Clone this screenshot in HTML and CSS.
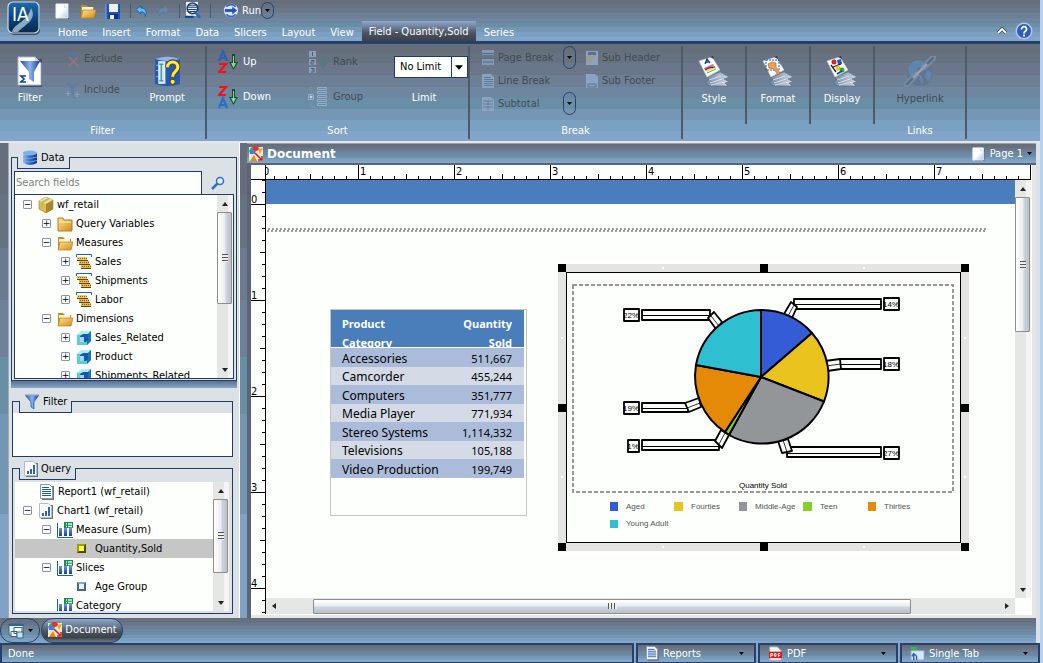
FILE: index.html
```html
<!DOCTYPE html>
<html lang="en">
<head>
<meta charset="utf-8">
<title>Document</title>
<link rel="stylesheet" href="styles.css">
</head>
<body>
<svg class="sprite" aria-hidden="true">
  <defs>
    <linearGradient id="g-page" x1="0" y1="0" x2="1" y2="1"><stop offset=".5" stop-color="#fff"/><stop offset="1" stop-color="#a8c4e4"/></linearGradient>
    <linearGradient id="g-fold" x1="0" y1="0" x2="1" y2="1"><stop offset="0" stop-color="#ffe58a"/><stop offset="1" stop-color="#d08a1c"/></linearGradient>
    <linearGradient id="g-blue" x1="0" x2="1"><stop offset="0" stop-color="#9cc8f4"/><stop offset=".4" stop-color="#3f78d0"/><stop offset="1" stop-color="#0c2f86"/></linearGradient>
    <linearGradient id="g-fun" x1="0" x2="1"><stop offset="0" stop-color="#1c4ca8"/><stop offset=".5" stop-color="#8cb4ec"/><stop offset="1" stop-color="#123c94"/></linearGradient>
    <linearGradient id="g-logo" x1="0" y1="0" x2="0" y2="1"><stop offset="0" stop-color="#1b6cae"/><stop offset=".55" stop-color="#0a4278"/><stop offset="1" stop-color="#08294c"/></linearGradient>
    <linearGradient id="g-bar" x1="0" y1="0" x2="0" y2="1"><stop offset="0" stop-color="#7fb0ea"/><stop offset="1" stop-color="#1a3f8c"/></linearGradient>
    <linearGradient id="g-paper" x1="0" y1="0" x2="1" y2="0"><stop offset="0" stop-color="#6f819c"/><stop offset="1" stop-color="#cfdbea"/></linearGradient>
  </defs>
  <symbol id="i-page" viewBox="0 0 16 16"><path d="M3 2h11v14H3z" fill="#46536a"/><path d="M1 1h12v14H1z" fill="url(#g-page)" stroke="#eef3f8"/><path d="M9 1v4h4z" fill="#dbe6f2"/></symbol>
  <symbol id="i-open" viewBox="0 0 16 16"><path d="M1 2h5l2 2h6v11H1z" fill="#c98b26"/><path d="M2 4h11v3H2z" fill="#fff6cf"/><path d="M3 7h13l-2 8H1z" fill="url(#g-fold)" stroke="#c17c14" stroke-width=".7"/></symbol>
  <symbol id="i-folder" viewBox="0 0 16 16"><path d="M1 2h5l1 2h8v11H1z" fill="url(#g-fold)" stroke="#b97d18"/><path d="M2 6h12" stroke="#fff0b0"/></symbol>
  <symbol id="i-save" viewBox="0 0 16 16"><path d="M1 1h14v15H2l-1-2z" fill="#1b53b8"/><path d="M4 1h9v8H4z" fill="#eaf2fc"/><path d="M4 11h9v5H4z" fill="#11307c"/><path d="M5 12h4v4H5z" fill="#e8f0fa"/><path d="M1 1v14" stroke="#6ea4ee"/></symbol>
  <symbol id="i-undo" viewBox="0 0 16 16"><path d="M1 6l6-5v3c6 0 9 4 6 11 0-4-2-6-6-6v3z" fill="#5cbcf4" stroke="#0e5aa4"/></symbol>
  <symbol id="i-redo" viewBox="0 0 16 16"><path d="M15 6L9 1v3C3 4 0 8 3 15c0-4 2-6 6-6v3z" fill="#6488ac" stroke="#587b9e"/></symbol>
  <symbol id="i-find" viewBox="0 0 16 16"><path d="M2 0h11v13H2z" fill="#fff"/><circle cx="8" cy="6" r="5" fill="#e9f3ff" stroke="#153a80" stroke-width="1.500"/><path d="M4 3h8M4 5h8M4 7h8M5 9h6" stroke="#153a80"/><path d="M11 10l4 5" stroke="#2d68bd" stroke-width="2.500"/><path d="M1 14h8" stroke="#174382" stroke-width="2"/></symbol>
  <symbol id="i-run" viewBox="0 0 16 16"><circle cx="8" cy="8" r="7.500" fill="#dfeafa"/><path d="M3 4a6.500 6.500 0 0 1 10 0M3 12a6.500 6.500 0 0 0 10 0" fill="none" stroke="#3668c2" stroke-width="2"/><path d="M1 6h8V3l6 5-6 5v-3H1z" fill="#2153bb" stroke="#fff" stroke-width=".7"/></symbol>
  <symbol id="i-funnel" viewBox="0 0 16 16"><path d="M1 1h14L10 8v7l-3-2V8z" fill="url(#g-fun)" stroke="#27509e" stroke-width=".7"/><path d="M1 1h14" stroke="#a8c8f0"/></symbol>
  <symbol id="i-filterpage" viewBox="0 0 26 31"><path d="M3 3h22v28H3z" fill="#3d5168"/><path d="M1 1h17l6 6v22H1z" fill="#fff" stroke="#a8bad0"/><path d="M18 1v6h6z" fill="#c4d2e4"/><path d="M3 5h20l-6 11v10l-5-3v-7z" fill="url(#g-fun)"/><path d="M9 20H4l3 3-3 3h5" fill="none" stroke="#10439a" stroke-width="1.700"/></symbol>
  <symbol id="i-exclude" viewBox="0 0 16 16"><path d="M0 1h15L10 7v7l-3-2V7z" fill="#5b7496"/><path d="M4 6l9 9M13 6l-9 9" stroke="#a07078" stroke-width="1.500"/></symbol>
  <symbol id="i-include" viewBox="0 0 16 16"><path d="M1 1h13L9 7v7l-3-2V7z" fill="#5f7f9f"/><path d="M3 9v5M.5 11.500h5M12 10v5M9.500 12.500h5" stroke="#86a2bc" stroke-width="1.200"/></symbol>
  <symbol id="i-prompt" viewBox="0 0 26 30"><path d="M1 3q12-5 24 0v24q-12 4-24 0z" fill="#2359b6"/><path d="M1 3q12-5 24 0-12 4-24 0z" fill="#8fb4ea"/><path d="M2 9h7M2 14h8M2 20h8" stroke="#8cb4e8"/><path d="M4 5h7v22H4z" fill="#ddebf0"/><path d="M7 8v16M5 8h4M5 24h4" stroke="#4898a0" stroke-width="1.500"/><path d="M13 11c0-7 10-7 10 0 0 4-5 4-5 9" fill="none" stroke="#574b10" stroke-width="5"/><path d="M13 11c0-7 10-7 10 0 0 4-5 4-5 9" fill="none" stroke="#ffe84a" stroke-width="3"/><circle cx="18" cy="25" r="2.500" fill="#ffe84a" stroke="#574b10"/></symbol>
  <symbol id="i-arrow" viewBox="0 0 9 16"><path d="M3 0h3v8h3l-4.500 8L0 8h3z" fill="#174d2c"/><path d="M4 2h1v7h2l-2.500 5L2 9h2z" fill="#8ed4a0"/></symbol>
  <symbol id="i-up" viewBox="0 0 21 24"><path d="M1 11L5 1l4 10M2.500 8h5" fill="none" stroke="#2e5fb4" stroke-width="2.200"/><path d="M1 14h7L1 22h7" fill="none" stroke="#f01414" stroke-width="2.200"/><use href="#i-arrow" x="11" y="4" width="9" height="16"/></symbol>
  <symbol id="i-down" viewBox="0 0 21 24"><path d="M1 2h7L1 10h7" fill="none" stroke="#f01414" stroke-width="2.200"/><path d="M1 23L5 13l4 10M2.500 20h5" fill="none" stroke="#2e6cc9" stroke-width="2.200"/><use href="#i-arrow" x="11" y="4" width="9" height="16"/></symbol>
  <symbol id="i-rank" viewBox="0 0 21 24"><path d="M1 1h7v6H1zM1 9h7v6H1zM1 17h7v6H1z" fill="#8ba1ba"/><path d="M4.500 2v4M3 10.500h3v1.500H3v2h3M3 18.500h3v3.500H3M4 20h2" stroke="#4a5f78" fill="none"/><path d="M15 7v8M12 13l3 4 3-4" stroke="#527a80" stroke-width="2" fill="none"/></symbol>
  <symbol id="i-group" viewBox="0 0 21 24"><g fill="#6e8ba8" stroke="#95aec8"><path d="M9.500 2.500h9v2h-9zM9.500 6.500h9v2h-9zM9.500 10.500h9v2h-9zM9.500 14.500h9v2h-9zM9.500 18.500h9v2h-9z"/><path d="M.5 9.500h5v5h-5z"/></g><path d="M3 10.500v3M1.500 12h3" stroke="#dde7f0"/><path d="M3 2v5M3 17v5h4" fill="none" stroke="#7d9cba" stroke-dasharray="1 1"/></symbol>
  <symbol id="i-pbreak" viewBox="0 0 14 16"><path d="M1 0h12v5H1zM1 9h12v6H1z" fill="#8299b6"/><path d="M1 3.500h12M2 12h10" stroke="#536d8d"/></symbol>
  <symbol id="i-lines" viewBox="0 0 14 16"><path d="M1 1h9l3 3v11H1z" fill="#8ba3be"/><path d="M3 4.500h7M3 6.500h9M3 8.500h9M3 10.500h9M3 12.500h9" stroke="#5f7b9c"/></symbol>
  <symbol id="i-subt" viewBox="0 0 14 16"><path d="M1 1h9l3 3v11H1z" fill="#8ba3be"/><path d="M2 5h10M2 8h10M2 11h10M7 4v10" stroke="#647f9e"/></symbol>
  <symbol id="i-subh" viewBox="0 0 14 16"><path d="M1 1h12v14H1z" fill="#8ba3be"/><path d="M3 2h8v3H3z" fill="#56708e"/><path d="M2 6h9l-6 7-3-2z" fill="#a09994"/></symbol>
  <symbol id="i-subf" viewBox="0 0 14 16"><path d="M1 1h9l3 3v11H1z" fill="#8ba3c2"/><path d="M3 11h8v3H3z" fill="#8ba3c2" stroke="#56708e"/></symbol>
  <symbol id="i-sheets" viewBox="0 0 32 32"><path d="M9 21l13-5 9 5-5 2 5 3-4 1 3 3H11l-4-4 4-2z" fill="url(#g-paper)" stroke="#55677f" stroke-width=".5"/><path d="M11 24l12-4M12 27l12-4M13 29l14-3" stroke="#e6edf6" stroke-width=".8"/><path d="M1 5L14 1l8 13-13 7z" fill="#fff" stroke="#c4cfde" stroke-width=".6"/><path d="M12 1l3-1 1 3z" fill="#2a3950"/></symbol>
  <symbol id="i-style" viewBox="0 0 32 32"><use href="#i-sheets"/><path d="M7 8l2-5 3 4M8 6.500l3-1" fill="none" stroke="#1f3f9c" stroke-width="1.400"/><path d="M6 12l9-4 1 2-9 4z" fill="#d75cae"/><path d="M8 14l9-4 1 2-9 4z" fill="#f4de3c"/><path d="M7 14l4-2 6-1" fill="none" stroke="#222"/><path d="M9 17l9-4" stroke="#58b858"/></symbol>
  <symbol id="i-format" viewBox="0 0 32 32"><use href="#i-sheets"/><path d="M4 4h13v10H4z" fill="none" stroke="#1b5d9e" stroke-dasharray="2 1"/><path d="M6 8l4-2 4 1 0 4 4 6-2 2-4-6-5-1z" fill="#f0a050" stroke="#a4561c" stroke-width=".6"/></symbol>
  <symbol id="i-display" viewBox="0 0 32 32"><use href="#i-sheets"/><circle cx="8" cy="6" r="2.500" fill="#e02020"/><path d="M11 4l4-1 1 5-4 1z" fill="#1a56d0"/><path d="M5 9l5 7M7 11l8-3" stroke="#222" stroke-width="1.300"/><path d="M9 11l4-2 2 4-4 2z" fill="#f0c818"/><circle cx="16" cy="14" r="2.500" fill="#28b030"/><path d="M11 18l5-3" stroke="#1646a4" stroke-width="2"/></symbol>
  <symbol id="i-link" viewBox="0 0 32 32"><circle cx="16" cy="17" r="13" fill="#607690"/><path d="M4 13q3-9 12-9l4 2-3 4-4 2 1 4-5 4-3-1zM15 19l3 1 1 8-3-3zM23 14l5 3-3 9-4-5z" fill="#5f87ae"/><path d="M3 28L12 19M20 11l9-9" stroke="#7c8da3" stroke-width="6" stroke-linecap="round"/><path d="M3 28L12 19M20 11l9-9" stroke="#5a6d86" stroke-width="2.500" stroke-linecap="round"/><path d="M9 22L23 8" stroke="#92a1b4" stroke-width="2.500"/></symbol>
  <symbol id="i-db" viewBox="0 0 16 16"><path d="M1 3v10q7 4 14 0V3z" fill="url(#g-blue)"/><ellipse cx="8" cy="3" rx="7" ry="2.500" fill="#7fb2ea"/><path d="M1 7q7 3 14 0M1 10.500q7 3 14 0" fill="none" stroke="#6fa4e4"/></symbol>
  <symbol id="i-search" viewBox="0 0 16 16"><path d="M2 14l6-6" stroke="#2e6fd0" stroke-width="2.500"/><circle cx="10" cy="6" r="3.500" fill="#e6f0fa" stroke="#2e6fd0" stroke-width="1.500"/></symbol>
  <symbol id="i-box" viewBox="0 0 16 16"><path d="M1 4l7-4 7 3v9l-7 4-7-4z" fill="#e3b94c" stroke="#a8782c" stroke-width=".6"/><path d="M1 4l7 3 7-4-7-3z" fill="#f4dc94"/><path d="M8 7l7-4v9l-7 4z" fill="#a98534"/><path d="M3 5l7-4 2 1-7 4v5l-2-1z" fill="#a9c470"/></symbol>
  <symbol id="i-meas" viewBox="0 0 16 16"><path d="M.5 3V.5h15V3" fill="none" stroke="#1d62b4"/><path d="M1 3h10v4H1z" fill="#efc96c"/><path d="M3 7h10v3H3z" fill="#e4b850"/><path d="M5 11h10v3H5z" fill="#e4b850"/><path d="M1 6.500h11M3 10.500h11M5 14.500h10" stroke="#6a4414"/><path d="M2 4.500h9M4 8.500h9M6 12.500h9" stroke="#8c5c1c" stroke-dasharray="1 1"/></symbol>
  <symbol id="i-cube" viewBox="0 0 16 16"><path d="M1 5l5-4h9v10l-4 4H1z" fill="#58d0cc"/><path d="M1 5l5-4h9l-4 4z" fill="#a8f0ec"/><path d="M11 5l4-4v10l-4 4z" fill="#167a98"/><path d="M4 6l3-2h5v6l-2 2H4z" fill="#1553c4"/><path d="M4 7h4v5H4z" fill="#a9d4f8"/></symbol>
  <symbol id="i-chart" viewBox="0 0 14 16"><path d="M2 2h12v14H2z" fill="#6d7480"/><path d="M.5.500h9l3 3v11H.5z" fill="#fff" stroke="#b2bcc8"/><path d="M3 13v-3h2v3zM6 13V8h2v5zM9 13V4h2v9z" fill="#2b62c4"/></symbol>
  <symbol id="i-report" viewBox="0 0 14 16"><path d="M2 2h12v14H2z" fill="#6d7480"/><path d="M.5.500h9l3 3v11H.5z" fill="#fff" stroke="#8c97a8"/><path d="M2 3.500h7M2 5.500h9M2 7.500h9M2 9.500h9M2 11.500h9" stroke="#1d5ab0"/></symbol>
  <symbol id="i-bars" viewBox="0 0 16 16"><path d="M.5 1v14.500H16" stroke="#1a62a8" fill="none"/><path d="M2 6h3v8H2zM7 4h3v10H7zM12 6h3v8h-3z" fill="url(#g-bar)"/><path d="M7 0h9v6H7z" fill="#1c8a5a"/><path d="M9 2h1M11 2h4M9 4.500h1M11 4.500h4" stroke="#d4ffd8" stroke-width="1.400"/></symbol>
  <symbol id="i-doc" viewBox="0 0 16 16"><path d="M1 1h14v14H1z" fill="#f2e8cc"/><circle cx="5" cy="4" r="3" fill="#34a868"/><path d="M5 0a4 4 0 0 1 6 4L5 6z" fill="#e83030"/><path d="M1 4h6v4H2z" fill="#3f80e0"/><path d="M10 3l5-1-3 6z" fill="#f4a42c"/><path d="M2 15l4-6 3 6z" fill="#e48818"/><path d="M7 7l7 7M14 10v4h-4" stroke="#d81c1c" stroke-width="1.500" fill="none"/></symbol>
  <symbol id="i-win" viewBox="0 0 16 16"><path d="M1 1h14v11H1z" fill="#eef4f4" stroke="#31668c"/><path d="M1 2h14" stroke="#31668c" stroke-width="2"/><path d="M6 4.500h8v6H6zM3 8.500h6v5H3z" fill="#fff" stroke="#31668c"/><path d="M9 9h6v6H9z" fill="#cfdfe8" stroke="#31668c"/></symbol>
  <symbol id="i-tab" viewBox="0 0 16 16"><path d="M1 1h6v3H1z" fill="#2fc040"/><path d="M1 5h14v10H1z" fill="#d9e6f4" stroke="#8ba6c6"/><path d="M4 15V9M2 11l2-3 3 3v4" fill="none" stroke="#2a62b4" stroke-width="1.500"/></symbol>
  <symbol id="i-pdf" viewBox="0 0 16 16"><path d="M2 1h8l4 4v10H2z" fill="#fff" stroke="#b8b8c0"/><path d="M1 6h14v7H1z" fill="#e01818"/><path d="M3 12V8h2v2H3M7 8v3h1.500V8zM11 12V8h2M11 10h2" fill="none" stroke="#fff"/></symbol>
  <symbol id="i-caret" viewBox="0 0 7 4"><path d="M0 0h7L3.500 4z"/></symbol>
  <symbol id="i-help" viewBox="0 0 18 18"><circle cx="9" cy="9" r="8.500" fill="#bcc8d8"/><circle cx="9" cy="9" r="7" fill="#2b5cc8"/><path d="M6.500 7.500c0-4 5.500-3.500 5 0 0 2-2.500 1.500-2.500 4M9 12.500v2" fill="none" stroke="#fff" stroke-width="1.800"/></symbol>
  <symbol id="i-logo" viewBox="0 0 34 34"><rect x="2" y="3" width="31" height="31" rx="5" fill="#3c4a5c"/><rect x="1" y="1" width="31" height="31" rx="5" fill="url(#g-logo)" stroke="#cfdbe8" stroke-width="1.200"/><path d="M5 31c2-9 15-9 19-24 7 12-7 17-13 24z" fill="#b4cfe2" opacity=".75"/></symbol>
</svg>

<div class="app">
  <header class="head">
    <div class="logo"><svg width="34" height="34"><use href="#i-logo"/></svg><span>IA</span></div>
    <div class="quick">
      <button aria-label="New"><svg width="16" height="16"><use href="#i-page"/></svg></button>
      <button aria-label="Open"><svg width="16" height="16"><use href="#i-open"/></svg></button>
      <button aria-label="Save"><svg width="16" height="16"><use href="#i-save"/></svg></button>
      <i class="bar"></i>
      <button class="tight" aria-label="Undo"><svg width="13" height="12"><use href="#i-undo"/></svg></button>
      <button aria-label="Redo"><svg width="13" height="12"><use href="#i-redo"/></svg></button>
      <i class="bar"></i>
      <button class="tight" aria-label="Preview"><svg width="17" height="17"><use href="#i-find"/></svg></button>
      <i class="bar"></i>
      <button class="run"><svg width="16" height="15"><use href="#i-run"/></svg>Run</button>
      <button class="pill small" aria-label="Run options"><svg width="5" height="3"><use href="#i-caret"/></svg></button>
    </div>
    <nav class="tabs">
      <button>Home</button><button>Insert</button><button>Format</button><button>Data</button><button>Slicers</button><button>Layout</button><button>View</button><button class="on">Field - Quantity,Sold</button><button>Series</button>
    </nav>
    <div class="help">
      <button aria-label="Collapse ribbon"><svg width="10" height="8" viewBox="0 0 10 8"><path d="M1 6l4-4 4 4" fill="none" stroke="#4c4c4c" stroke-width="3.500"/><path d="M1 6l4-4 4 4" fill="none" stroke="#fff" stroke-width="1.800"/></svg></button>
      <button aria-label="Help"><svg width="18" height="18"><use href="#i-help"/></svg></button>
    </div>
  </header>

  <section class="ribbon">
    <div class="group g-filter">
      <div class="tools">
        <button class="big"><svg width="28" height="31"><use href="#i-filterpage"/></svg>Filter</button>
        <div class="stack">
          <button disabled><svg width="16" height="16"><use href="#i-exclude"/></svg>Exclude</button>
          <button disabled><svg width="16" height="16"><use href="#i-include"/></svg>Include</button>
        </div>
        <button class="big"><svg width="27" height="31"><use href="#i-prompt"/></svg>Prompt</button>
      </div>
      <h2>Filter</h2>
    </div>
    <div class="group g-sort">
      <div class="tools">
        <div class="stack wide">
          <button><svg width="21" height="24"><use href="#i-up"/></svg>Up</button>
          <button><svg width="21" height="24"><use href="#i-down"/></svg>Down</button>
        </div>
        <div class="stack wide">
          <button disabled><svg width="21" height="24"><use href="#i-rank"/></svg>Rank</button>
          <button disabled><svg width="21" height="24"><use href="#i-group"/></svg>Group</button>
        </div>
        <div class="limit">
          <div class="combo"><select id="limit"><option>No Limit</option></select><svg width="8" height="5"><use href="#i-caret"/></svg></div>
          <label for="limit">Limit</label>
        </div>
      </div>
      <h2>Sort</h2>
    </div>
    <div class="group g-break">
      <div class="tools">
        <div class="stack three">
          <button disabled><svg width="14" height="16"><use href="#i-pbreak"/></svg>Page Break</button>
          <button disabled><svg width="14" height="16"><use href="#i-lines"/></svg>Line Break</button>
          <button disabled><svg width="14" height="16"><use href="#i-subt"/></svg>Subtotal</button>
        </div>
        <div class="pills">
          <button class="pill" aria-label="Page break options"><svg width="5" height="3"><use href="#i-caret"/></svg></button>
          <button class="pill" aria-label="Subtotal options"><svg width="5" height="3"><use href="#i-caret"/></svg></button>
        </div>
        <div class="stack three">
          <button disabled><svg width="14" height="16"><use href="#i-subh"/></svg>Sub Header</button>
          <button disabled><svg width="14" height="16"><use href="#i-subf"/></svg>Sub Footer</button>
        </div>
      </div>
      <h2>Break</h2>
    </div>
    <div class="group solo"><button class="big"><svg width="32" height="32"><use href="#i-style"/></svg>Style</button></div>
    <div class="group solo"><button class="big"><svg width="32" height="32"><use href="#i-format"/></svg>Format</button></div>
    <div class="group solo"><button class="big"><svg width="32" height="32"><use href="#i-display"/></svg>Display</button></div>
    <div class="group g-links">
      <div class="tools"><button class="big" disabled><svg width="32" height="32"><use href="#i-link"/></svg>Hyperlink</button></div>
      <h2>Links</h2>
    </div>
  </section>

  <main class="work">
    <aside class="side">
      <section class="box data">
        <h3><svg width="16" height="16"><use href="#i-db"/></svg>Data</h3>
        <div class="search"><input type="text" placeholder="Search fields" aria-label="Search fields"><button aria-label="Search"><svg width="16" height="16"><use href="#i-search"/></svg></button></div>
        <div class="pane">
          <ul class="tree">
            <li class="l0"><button class="tog">−</button><svg width="16" height="16"><use href="#i-box"/></svg>wf_retail</li>
            <li class="l1"><button class="tog">+</button><svg width="16" height="16"><use href="#i-folder"/></svg>Query Variables</li>
            <li class="l1"><button class="tog">−</button><svg width="16" height="16"><use href="#i-open"/></svg>Measures</li>
            <li class="l2"><button class="tog">+</button><svg width="16" height="16"><use href="#i-meas"/></svg>Sales</li>
            <li class="l2"><button class="tog">+</button><svg width="16" height="16"><use href="#i-meas"/></svg>Shipments</li>
            <li class="l2"><button class="tog">+</button><svg width="16" height="16"><use href="#i-meas"/></svg>Labor</li>
            <li class="l1"><button class="tog">−</button><svg width="16" height="16"><use href="#i-open"/></svg>Dimensions</li>
            <li class="l2"><button class="tog">+</button><svg width="16" height="16"><use href="#i-cube"/></svg>Sales_Related</li>
            <li class="l2"><button class="tog">+</button><svg width="16" height="16"><use href="#i-cube"/></svg>Product</li>
            <li class="l2"><button class="tog">+</button><svg width="16" height="16"><use href="#i-cube"/></svg>Shipments_Related</li>
          </ul>
          <div class="vbar"><button class="arr up" aria-label="Scroll up"></button><div class="thumb t-data"></div><button class="arr down" aria-label="Scroll down"></button></div>
        </div>
      </section>
      <div class="gutter"></div>
      <section class="box filt">
        <h3><svg width="16" height="16"><use href="#i-funnel"/></svg>Filter</h3>
        <div class="blank"></div>
      </section>
      <section class="box query">
        <h3><svg width="14" height="16"><use href="#i-chart"/></svg>Query</h3>
        <div class="pane">
          <ul class="tree">
            <li class="l0 leaf"><svg width="14" height="16"><use href="#i-report"/></svg>Report1 (wf_retail)</li>
            <li class="l0"><button class="tog">−</button><svg width="14" height="16"><use href="#i-chart"/></svg>Chart1 (wf_retail)</li>
            <li class="l1"><button class="tog">−</button><svg width="16" height="16"><use href="#i-bars"/></svg>Measure (Sum)</li>
            <li class="l2 leaf sel"><i class="dot yellow"></i>Quantity,Sold</li>
            <li class="l1"><button class="tog">−</button><svg width="16" height="16"><use href="#i-bars"/></svg>Slices</li>
            <li class="l2 leaf"><i class="dot"></i>Age Group</li>
            <li class="l1 leaf"><svg width="16" height="16"><use href="#i-bars"/></svg>Category</li>
          </ul>
          <div class="vbar"><button class="arr up" aria-label="Scroll up"></button><div class="thumb t-query"></div><button class="arr down" aria-label="Scroll down"></button></div>
        </div>
      </section>
    </aside>

    <section class="doc">
      <div class="caption">
        <svg width="16" height="16"><use href="#i-doc"/></svg><h1>Document</h1>
        <button class="pages"><svg width="14" height="16"><use href="#i-page"/></svg>Page 1<svg width="5" height="3"><use href="#i-caret"/></svg></button>
      </div>
      <div class="sheet">
        <div class="corner"></div>
        <svg class="hrule" width="100%" height="15">
          <defs><pattern id="ph" x="-4" y="0" width="96" height="15" patternUnits="userSpaceOnUse"><path d="M0 0h1v14H0zM12 11h1v3h-1zM24 11h1v3h-1zM36 11h1v3h-1zM48 9h1v5h-1zM60 11h1v3h-1zM72 11h1v3h-1zM84 11h1v3h-1z"/></pattern></defs>
          <rect width="100%" height="14" fill="url(#ph)"/><rect y="14" width="100%" height="1"/>
          <text x="-3" y="10">0</text><text x="94" y="10">1</text><text x="190" y="10">2</text><text x="286" y="10">3</text><text x="382" y="10">4</text><text x="478" y="10">5</text><text x="574" y="10">6</text><text x="670" y="10">7</text>
        </svg>
        <svg class="vrule" width="15" height="100%">
          <defs><pattern id="pv" x="0" y="24" width="15" height="96" patternUnits="userSpaceOnUse"><path d="M0 0h14v1H0zM11 12h3v1h-3zM11 24h3v1h-3zM11 36h3v1h-3zM9 48h5v1H9zM11 60h3v1h-3zM11 72h3v1h-3zM11 84h3v1h-3z"/></pattern></defs>
          <rect width="14" height="100%" fill="url(#pv)"/><rect x="14" width="1" height="100%"/>
          <text x="0" y="23">0</text><text x="0" y="119">1</text><text x="0" y="215">2</text><text x="0" y="311">3</text><text x="0" y="407">4</text>
        </svg>
        <div class="canvas">
          <div class="band"></div>
          <svg class="hatch" width="720" height="4"><defs><pattern id="hx" width="4" height="4" patternUnits="userSpaceOnUse"><path d="M2 0h2v2H2zM1 2h2v2H1z" fill="#999"/></pattern></defs><rect width="720" height="4" fill="url(#hx)"/></svg>
          <div class="report">
            <table>
              <thead><tr><th><div>Product<br>Category</div></th><th><div>Quantity<br>Sold</div></th></tr></thead>
              <tbody>
                <tr><td>Accessories</td><td>511,667</td></tr>
                <tr><td>Camcorder</td><td>455,244</td></tr>
                <tr><td>Computers</td><td>351,777</td></tr>
                <tr><td>Media Player</td><td>771,934</td></tr>
                <tr><td>Stereo Systems</td><td>1,114,332</td></tr>
                <tr><td>Televisions</td><td>105,188</td></tr>
                <tr><td>Video Production</td><td>199,749</td></tr>
              </tbody>
            </table>
          </div>
          <svg class="chart" width="411" height="287" viewBox="558 264 411 287" role="img" aria-label="Quantity Sold pie chart">
            <rect x="558" y="264" width="411" height="287" fill="#e4e4e4"/>
            <rect x="566.500" y="272.500" width="394" height="270" fill="#fcfffc" stroke="#000"/>
            <rect x="573" y="285" width="380" height="207" fill="none" stroke="#777" stroke-width="1.500" stroke-dasharray="4 2"/>
            <g>
              <path d="M558 264h8v8h-8zM760 264h8v8h-8zM961 264h8v8h-8zM558 404h8v8h-8zM961 404h8v8h-8zM558 543h8v8h-8zM760 543h8v8h-8zM961 543h8v8h-8z"/>
              <path d="M662 267h2v2h-2zM863 267h2v2h-2zM662 546h2v2h-2zM863 546h2v2h-2zM561 337h2v2h-2zM964 337h2v2h-2zM561 476h2v2h-2zM964 476h2v2h-2z" fill="#fff"/>
            </g>
            <g fill="#fcfffc" stroke="#000" stroke-width="1.800" stroke-linejoin="round">
              <path d="M642 310h68v10h-68zM642 403h46v9h-46zM642 440h77v10h-77zM794 299h87v10h-87zM840 359h41v10h-41zM787 447h94v10h-94z"/>
              <path d="M624 309h15v12h-15zM624 402h15v12h-15zM628 440h11v12h-11zM884 298h15v12h-15zM884 358h15v12h-15zM884 447h15v12h-15z"/>
              <path fill="none" stroke-width="1" d="M642 315.500h68M642 408.500h46M642 446.500h77M794 304.500h88M840 364.500h42M787 453.500h95"/>
              <path d="M708 318l6-6 8 10-6 7zM685 403l14-5 2 9-12 5zM721 430l8 5-7 13-7-7zM784 314l7-12 6 5-5 11zM825 361l15-2 1 10-14 2zM778 441l10-2 4 12-10 2z"/>
              <path fill="none" stroke-width=".8" d="M711 316l8 10M687 408l13-5M725 433l-6 11M788 316l6-11M826 366l15-2M783 440l4 12"/>
            </g>
            <g stroke="#000" stroke-width="2" stroke-linejoin="round">
              <path d="M761 377V310A67 67 0 0 1 812 333z" fill="#345dd5"/>
              <path d="M761 377l51-44A67 67 0 0 1 824 401.500z" fill="#ebc31f"/>
              <path d="M761 377l63 24.500A67 67 0 0 1 729 435z" fill="#929699"/>
              <path d="M761 377l-32 58-4-3z" fill="#88cf2c"/>
              <path d="M761 377l-36 55A67 67 0 0 1 696 365z" fill="#e58a06"/>
              <path d="M761 377l-65-12A67 67 0 0 1 761 310z" fill="#2ebfd0"/>
            </g>
            <g class="pct" text-anchor="middle"><text x="631" y="318">22%</text><text x="631" y="411">19%</text><text x="633" y="449">1%</text><text x="891" y="307">14%</text><text x="891" y="367">18%</text><text x="891" y="456">27%</text></g>
            <text class="axis" x="739" y="488">Quantity Sold</text>
            <g class="key">
              <path d="M610 502h8v9h-8z" fill="#345dd5"/><text x="626" y="509">Aged</text>
              <path d="M674 502h9v9h-9z" fill="#ebc31f"/><text x="691" y="509">Fourties</text>
              <path d="M739 502h8v9h-8z" fill="#929699"/><text x="755" y="509">Middle-Age</text>
              <path d="M803 502h9v9h-9z" fill="#88cf2c"/><text x="820" y="509">Teen</text>
              <path d="M868 502h8v9h-8z" fill="#e58a06"/><text x="884" y="509">Thirties</text>
              <path d="M610 520h8v8h-8z" fill="#2ebfd0"/><text x="626" y="526">Young Adult</text>
            </g>
          </svg>
        </div>
        <div class="vbar"><button class="arr up" aria-label="Scroll up"></button><div class="thumb t-doc"></div><button class="arr down" aria-label="Scroll down"></button></div>
        <div class="hbar"><button class="arr left" aria-label="Scroll left"></button><div class="hthumb"></div><button class="arr right" aria-label="Scroll right"></button></div>
      </div>
    </section>
  </main>

  <nav class="tasks">
    <button class="win" aria-label="Windows"><svg width="16" height="16"><use href="#i-win"/></svg><svg width="5" height="3"><use href="#i-caret"/></svg></button>
    <button class="cur"><svg width="16" height="16"><use href="#i-doc"/></svg>Document</button>
  </nav>
  <footer class="status">
    <div class="done">Done</div>
    <div class="pick p1"><svg width="13" height="15"><use href="#i-report"/></svg><select aria-label="Output type"><option>Reports</option></select><svg class="c" width="5" height="3"><use href="#i-caret"/></svg></div>
    <div class="pick p2"><svg width="15" height="15"><use href="#i-pdf"/></svg><select aria-label="Format"><option>PDF</option></select><svg class="c" width="5" height="3"><use href="#i-caret"/></svg></div>
    <div class="pick p2"><svg width="15" height="15"><use href="#i-tab"/></svg><select aria-label="Window mode"><option>Single Tab</option></select><svg class="c" width="5" height="3"><use href="#i-caret"/></svg></div>
  </footer>
</div>
</body>
</html>
```

FILE: styles.css
```css
:root {
  --navy: #1f3c66;
  --paper: #fcfffc;
  --face: #dce1e6;
  --steel: linear-gradient(#666d7b 0 9%, #66727f 9% 20%, #6b768b 20% 32%, #6c7f94 32% 44%, #6f86a0 44% 56%, #698fa6 56% 67%, #7596b4 67% 78%, #7aa1c2 78% 90%, #83a5c9 90%);
}
* { box-sizing: border-box; }
body, h1, h2, h3, ul { margin: 0; padding: 0; }
body { background: #b8cfee; font: 11px/16px "DejaVu Sans Condensed", "DejaVu Sans", sans-serif; color: #000; }
button, select, input { font: inherit; color: inherit; margin: 0; padding: 0; border: 0; background: none; }
button { display: flex; align-items: center; justify-content: center; white-space: nowrap; }
select { appearance: none; outline: 0; }
svg { display: block; flex: none; }
.sprite { position: absolute; width: 0; height: 0; }
.app { height: 100vh; display: flex; flex-direction: column; margin-right: 3px; overflow: hidden; }

/* title and tabs */
.head { flex: none; display: grid; grid-template-columns: 51px 1fr auto; grid-template-rows: 21px 20px; background: var(--steel); color: #fff; border-bottom: 3px solid #27406a; box-sizing: content-box; }
.logo { grid-row: 1 / 3; position: relative; padding: 1px 0 0 7px; }
.logo span { position: absolute; left: 12px; top: 4px; font: 19px/20px "DejaVu Sans Condensed", sans-serif; }
.quick { display: flex; align-items: center; gap: 9px; padding-left: 4px; grid-column: 2 / 4; }
.quick .bar { width: 1px; height: 14px; background: #4e5a6b; }
.quick .tight { margin-left: -5px; }
.quick .run { gap: 3px; margin-left: 3px; }
.quick .small { margin-left: -9px; }
.pill { width: 13px; height: 23px; border: 1px solid #27406a; border-radius: 7px; color: #000; }
.pill.small { height: 17px; }
.tabs { display: flex; align-items: stretch; gap: 1px; }
.tabs button { padding: 4px 7px 0; }
.tabs .on { padding-top: 2px; background: linear-gradient(#8da9ce, #7488a4 25%, #4b5360 60%, #3b4148); }
.help { display: flex; gap: 8px; align-items: center; padding-right: 7px; }

/* ribbon */
.ribbon { flex: none; display: flex; background: var(--steel); color: #fff; padding: 2px 0; height: 97px; }
.group { border-right: 2px solid #4f5a69; display: flex; flex-direction: column; }
.group h2 { font: inherit; text-align: center; }
.tools { display: flex; height: 78px; }
.ribbon button:disabled { color: #434a50; }
.big { flex-direction: column; justify-content: flex-start; padding-top: 10px; gap: 3px; }
.stack { display: flex; flex-direction: column; }
.stack button { gap: 3px; justify-content: flex-start; }
.g-filter { flex: 0 0 207px; }
.g-filter .tools { padding: 0 20px 0 16px; justify-content: space-between; }
.g-filter .stack { gap: 15px; padding: 5px 6px 0 0; }
.g-sort { flex: 0 0 263px; }
.g-sort .tools { padding-left: 11px; }
.wide { gap: 11px; padding-top: 4px; flex: 0 0 90px; }
.wide button { height: 24px; gap: 4px; }
.limit { text-align: center; width: 74px; margin-top: 10px; margin-left: -4px; }
.combo { display: flex; align-items: center; border: 1px solid var(--navy); background: var(--paper); color: #000; height: 22px; position: relative; margin-bottom: 12px; }
.combo select { width: 100%; height: 100%; padding-left: 5px; border-right: 1px solid var(--navy); margin-right: 15px; }
.combo svg { position: absolute; right: 4px; }
.limit label { padding-right: 14px; }
.g-break { flex: 0 0 213px; }
.g-break .tools { padding-left: 11px; }
.three { gap: 7px; padding-top: 4px; }
.three:first-child { flex: 0 0 82px; }
.three:last-child { padding-left: 9px; }
.pills { display: flex; flex-direction: column; gap: 23px; }
.solo { flex: 0 0 64px; height: 78px; }
.g-links { flex: 0 0 92px; }
.g-links .tools { justify-content: center; }

/* workspace */
.work { flex: 1; display: flex; border-top: 2px solid #e4e6ea; min-height: 0; background: linear-gradient(#666d7b 0 11%, #66727f 11% 22%, #6b7a8f 22% 33%, #6f819a 33% 45%, #698fa6 45% 57%, #7496b2 57% 78%, #7fa2c6 78%); padding-left: 8px; }
.side { flex: 0 0 232px; background: var(--face); border-left: 1px solid #a3a9b4; border-right: 1px solid #fff; padding: 14px 2px 4px; display: flex; flex-direction: column; }
.box { border: 1px solid var(--navy); display: flex; flex-direction: column; min-height: 0; }
.box h3 { flex: none; font: inherit; align-self: flex-start; display: flex; align-items: flex-end; gap: 3px; height: 12px; margin: -1px 0 0 6px; padding: 0 4px 2px; border: 1px solid var(--navy); border-top: 0; background: var(--face); }
.data { flex: 0 0 224px; padding: 0 2px 1px; }
.data h3 { margin-left: 3px; }
.search { flex: none; display: flex; margin-top: 2px; height: 24px; }
.search input { flex: 1; min-width: 0; border: 1px solid var(--navy); background: var(--paper); padding: 0 1px; outline: 0; }
.search input::placeholder { color: #808080; opacity: 1; }
.search button { width: 32px; }
.data .pane { border: 1px solid var(--navy); margin-top: -1px; }
.pane { display: flex; flex: 1; min-height: 0; overflow: hidden; background: var(--paper); }
.tree { list-style: none; flex: 1; min-width: 0; overflow: hidden; }
.tree li { display: flex; align-items: center; height: 19px; gap: 3px; white-space: nowrap; }
.tog { width: 9px; height: 9px; border: 1px solid #8695ad; border-radius: 1px; font: 9px/7px "DejaVu Sans", sans-serif; margin-right: 3px; background: #fff; }
.l0 { padding-left: 8px; } .l1 { padding-left: 27px; } .l2 { padding-left: 46px; }
.gutter { height: 7px; flex: none; margin-bottom: 13px; background: linear-gradient(#5d708a, #86a8cc); }
.filt { flex: 0 0 56px; margin: 0 4px 11px 1px; }
.blank { flex: 1; background: var(--paper); }
.query { flex: 1; margin: 0 4px 0 1px; padding: 0 3px 2px 2px; }
.query h3 { margin-left: 4px; margin-bottom: 2px; }
.query .l0.leaf { padding-left: 25px; } .query .l1.leaf { padding-left: 42px; } .query .l2.leaf { padding-left: 62px; }
.query .l0 { gap: 4px; }
.query .l2.leaf { gap: 9px; }
.sel { background: #c6c6c6; }
.dot { width: 9px; height: 9px; border: 2px solid #4c6386; border-top-color: #8fa9cc; background: #eef4fb; }
.dot.yellow { border-color: #a39c00 #4c4a10 #4c4a10 #a39c00; background: #ffff40; }

/* scroll bars */
.vbar { flex: 0 0 16px; display: flex; flex-direction: column; background: #e6e6e6; box-shadow: inset -5px 0 #f4f4f4; }
.arr { flex: none; width: 15px; height: 17px; }
.arr::before { content: ""; border: 3px solid transparent; }
.up::before { border-bottom: 4px solid #222; border-top: 0; }
.down { margin-top: auto; }
.down::before { border-top: 4px solid #222; border-bottom: 0; }
.left::before { border-right: 4px solid #222; border-left: 0; }
.right { margin-left: auto; }
.right::before { border-left: 4px solid #222; border-right: 0; }
.thumb { flex: none; width: 15px; border: 1px solid #8e8e8e; border-radius: 1px; background: repeating-linear-gradient(#555 0 1px, #eee 1px 3px) center / 6px 8px no-repeat, linear-gradient(90deg, #fff, #ececec 55%, #c8d6e8 60%, #c0c0c0); }
.t-data { height: 92px; } .t-query { height: 74px; } .t-doc { height: 135px; }
.hbar { grid-area: 3 / 2; display: flex; align-items: center; background: #e6e6e6; }
.hbar .arr { width: 16px; }
.hthumb { flex: 0 1 598px; margin-left: 31px; height: 15px; border: 1px solid #8e8e8e; border-radius: 1px; background: repeating-linear-gradient(90deg, #555 0 1px, #eee 1px 3px) center / 9px 6px no-repeat, linear-gradient(#fff, #ececec 45%, #c8d6e8 55%, #c0c0c0); }

/* document */
.doc { flex: 1; min-width: 0; margin-left: 7px; border-right: 4px solid var(--face); display: flex; flex-direction: column; }
.caption { flex: none; display: flex; align-items: center; height: 20px; gap: 3px; padding: 0 4px 0 1px; color: #fff; background: var(--steel); border-top: 1px solid #9aa0ac; }
h1 { font: bold 12px/16px "DejaVu Sans", sans-serif; flex: 1; }
.pages { gap: 4px; }
.pages svg:last-child { color: #000; }
.sheet { flex: 1; min-height: 0; display: grid; grid-template: 15px minmax(0, 1fr) 16px / 15px minmax(0, 1fr) 16px; border: solid #5c6478; border-width: 2px 0 0 4px; padding: 0 5px 4px 0; background: var(--paper); box-shadow: inset -4px -3px #e6e6e6; }
.corner { border: solid #000; border-width: 0 1px 1px 0; }
.sheet text { font: 11px "DejaVu Sans Condensed", sans-serif; }
.hrule { grid-area: 1 / 2 / 2 / 4; border-right: 1px solid #000; }
.vrule { grid-area: 2 / 1 / 4 / 2; }
.canvas { grid-area: 2 / 2; position: relative; overflow: hidden; }
.band { height: 24px; background: #4a7ebb; }
.hatch { margin-top: 24px; }
.report { position: absolute; left: 64px; top: 129px; width: 197px; height: 207px; border: 1px solid #c4c6c4; }
.report table { width: 193px; border-spacing: 0; font: 12px/16px "Noto Sans", sans-serif; }
.report th { background: #4a7ebb; color: #fff; text-align: left; padding: 0 12px 0 11px; font-size: 11px; border-bottom: 1px solid #fff; }
.report th div { height: 37px; padding-top: 4px; line-height: 19px; overflow: hidden; }
.report th + th, .report td + td { text-align: right; padding-left: 0; }
.report td { padding: 2px 12px 0 11px; height: 19px; background: #abbcda; white-space: nowrap; }
.report td + td { font-size: 11px; }
.report tr:nth-child(even) td { background: #d4dbe6; height: 18px; }
.chart { position: absolute; left: 292px; top: 84px; }
.chart .pct text, .chart .axis, .chart .key text { font: 8px "Liberation Sans", sans-serif; }
.chart .key text { fill: #555; }

/* bottom bars */
.tasks { flex: none; display: flex; gap: 1px; height: 25px; background: var(--steel); border-right: 4px solid var(--face); }
.tasks button { height: 25px; border-radius: 12px; border: 1px solid #27406a; color: #fff; gap: 3px; }
.tasks .win { width: 40px; color: #000; gap: 4px; }
.tasks .cur { width: 82px; gap: 2px; background: linear-gradient(#8ea6c4, #6b7d95 30%, #4a535f 55%, #3c4249 80%, #6b7c90); padding-bottom: 2px; }
.status { flex: none; display: flex; gap: 2px; height: 20px; color: #fff; background: #8aa6c6; }
.status > div { border: 2px solid #27406a; border-bottom-width: 1px; background: var(--steel); display: flex; align-items: center; }
.status .done { flex: 1; padding-left: 6px; }
.pick { padding: 0 10px 0 8px; gap: 4px; }
.pick select { flex: 1; min-width: 0; }
.pick option { color: #000; }
.pick .c { color: #000; }
.p1 { flex: 0 0 120px; } .p2 { flex: 0 0 140px; }
```
